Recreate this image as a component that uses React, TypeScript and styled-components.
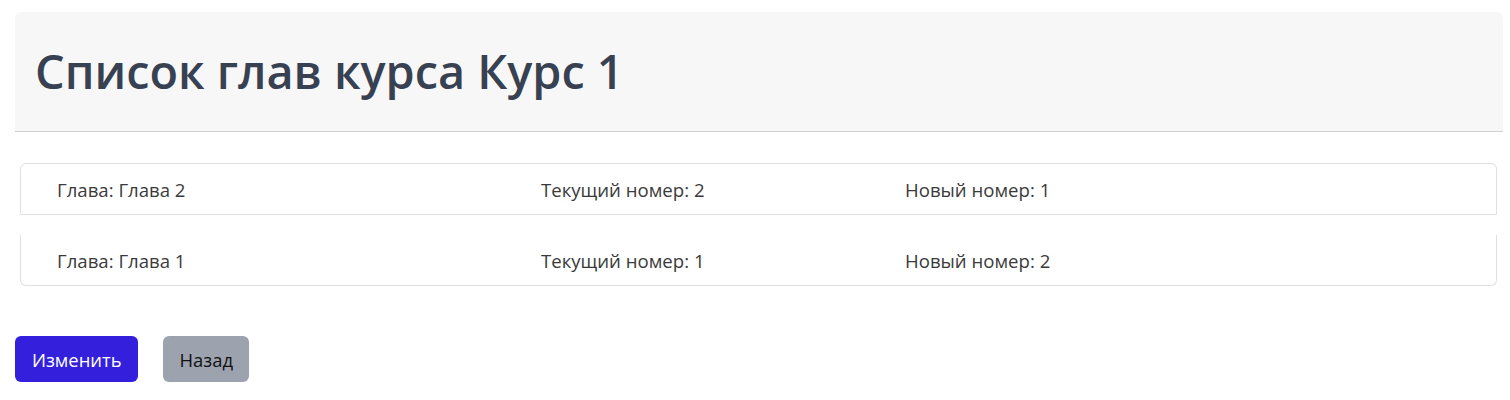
import styled, { createGlobalStyle } from "styled-components";

const GlobalStyle = createGlobalStyle`
  body {
    margin: 0;
    background: #ffffff;
    font-family: "Open Sans", "Noto Sans", sans-serif;
  }
`;

const chapters = [
  { title: "Глава 2", current: 2, next: 1 },
  { title: "Глава 1", current: 1, next: 2 },
];

const Page = styled.div`
  padding: 12px 7px 0 15px;
`;

const Header = styled.div`
  display: flex;
  align-items: center;
  height: 119px;
  padding-left: 20px;
  background: #f7f7f7;
  border-bottom: 1px solid #cfcfd4;
  border-radius: 6px 6px 0 0;
`;

const Title = styled.h1`
  margin: 0;
  font-size: 46.8px;
  font-weight: 600;
  line-height: 1;
  color: #374151;
`;

const List = styled.div`
  margin: 31px 6px 0 5px;
`;

const Item = styled.div<{ $first: boolean; $last: boolean }>`
  display: grid;
  grid-template-columns: 484px 364px 1fr;
  align-items: center;
  height: 50px;
  padding-left: 36px;
  margin-top: ${(p) => (p.$first ? "0" : "20px")};
  border: 1px solid #e0e0e0;
  border-top-width: ${(p) => (p.$first ? "1px" : "0")};
  border-radius: ${(p) =>
    p.$first ? "6px 6px 0 0" : p.$last ? "0 0 6px 6px" : "0"};
  font-size: 18.6px;
  color: #3a3a3a;
`;

const Cell = styled.span``;

const Actions = styled.div`
  display: flex;
  gap: 25px;
  margin-top: 50px;
`;

const Button = styled.button<{ $variant: "primary" | "secondary" }>`
  height: 46px;
  padding: 0 16px 0 17px;
  border: none;
  border-radius: 6px;
  font-family: inherit;
  font-size: 18.4px;
  cursor: pointer;
  background: ${(p) => (p.$variant === "primary" ? "#341fdc" : "#9ca3af")};
  color: ${(p) => (p.$variant === "primary" ? "#ffffff" : "#111111")};
`;

const App = () => {
  return (
    <Page>
      <GlobalStyle />
      <Header>
        <Title>Список глав курса Курс 1</Title>
      </Header>
      <List>
        {chapters.map((chapter, index) => (
          <Item
            key={chapter.title}
            $first={index === 0}
            $last={index === chapters.length - 1}
          >
            <Cell>Глава: {chapter.title}</Cell>
            <Cell>Текущий номер: {chapter.current}</Cell>
            <Cell>Новый номер: {chapter.next}</Cell>
          </Item>
        ))}
      </List>
      <Actions>
        <Button $variant="primary">Изменить</Button>
        <Button $variant="secondary">Назад</Button>
      </Actions>
    </Page>
  );
};

export default App;
